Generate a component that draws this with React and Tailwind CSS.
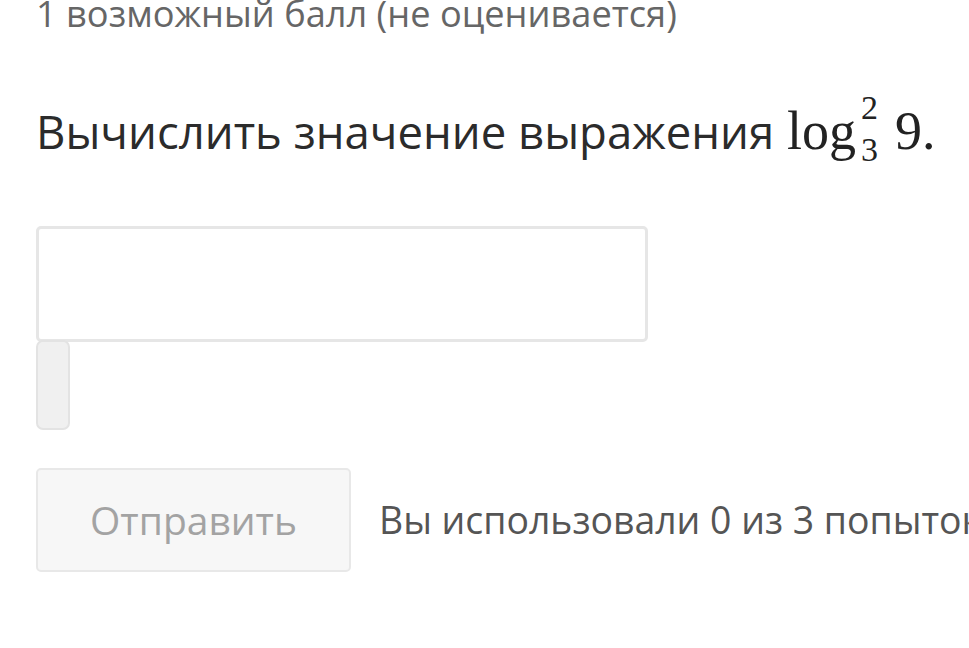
export default function App() {
  return (
    <div className="w-[969px] h-[648px] overflow-hidden bg-white" style={{ fontFamily: '"Open Sans", sans-serif' }}>
      <div className="pl-[36px]">
        <div className="mt-[-9px] whitespace-nowrap text-[36.2px] leading-[44px] text-[#666666]">1 возможный балл (не оценивается)</div>
        <div className="mt-[66px] whitespace-nowrap text-[45.5px] leading-[60px] text-[#2b2b2b]">
          <span>Вычислить значение выражения </span>
          <span className="ml-[1px] text-[54px] leading-[60px] text-[#222222]" style={{ fontFamily: '"Liberation Serif", serif' }}>
            log
            <span className="relative top-[-30px] ml-[5px] text-[34px]">2</span>
            <span className="relative top-[12px] ml-[-17px] text-[34px]">3</span>
            <span className="ml-[17px]">9.</span>
          </span>
        </div>
        <div className="mt-[58px] w-[612px] h-[116px] rounded-[5px] border-[3px] border-[#e6e6e6] bg-white"></div>
        <div className="w-[34px] h-[90px] rounded-[7px] border-2 border-[#e3e3e3] bg-[#f0f0f0] mt-[-2px]"></div>
        <div className="mt-[38px] flex items-center">
          <div className="w-[315px] h-[104px] shrink-0 rounded-[5px] border-2 border-[#e8e8e8] bg-[#f7f7f7] flex items-center justify-center text-[39px] text-[#a3a3a3]">Отправить</div>
          <div className="ml-[28px] whitespace-nowrap text-[37.4px] text-[#555555]">Вы использовали 0 из 3 попыток</div>
        </div>
      </div>
    </div>
  );
}
